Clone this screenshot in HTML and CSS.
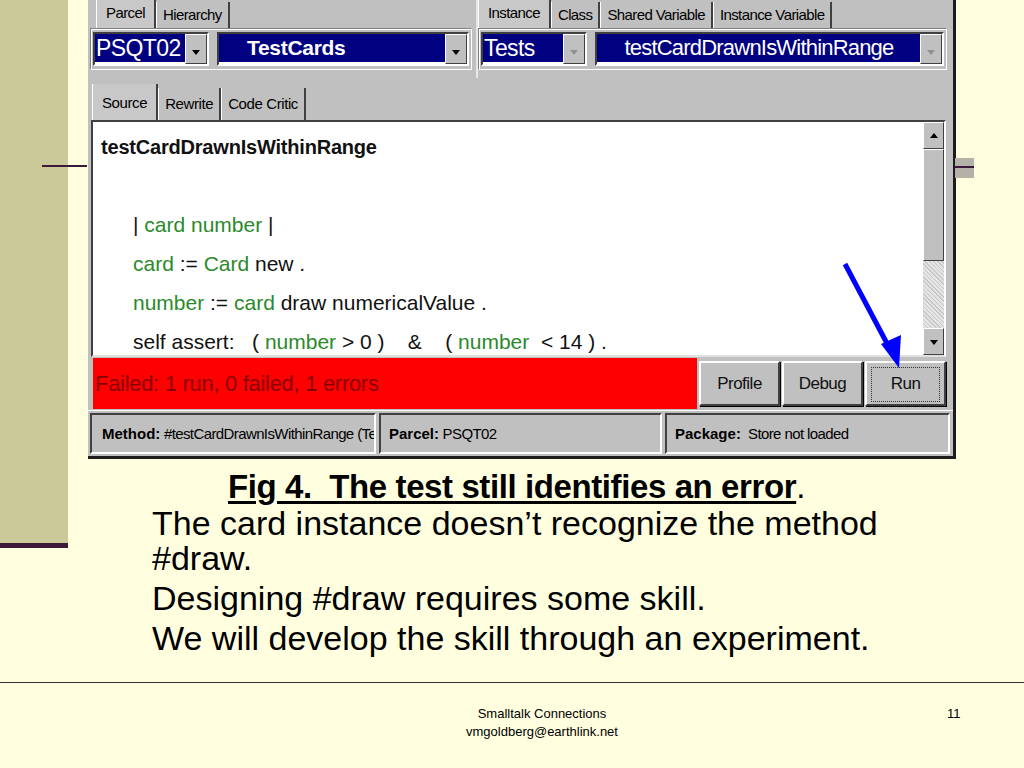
FILE: index.html
```html
<!DOCTYPE html>
<html lang="en">

<head>
    <meta charset="UTF-8">
    <title>Smalltalk Connections - 11</title>
    <link rel="stylesheet" href="styles.css">
</head>

<body>

    <div class="slide">

        <div class="top">
            <aside class="band"></aside>

            <main class="content">

                <section class="window">

                    <div class="panes">
                        <div class="pane pane-left">
                            <nav class="tabs">
                                <span class="tab active">Parcel</span>
                                <span class="tab">Hierarchy</span>
                            </nav>
                            <div class="combos">
                                <div class="combo small">
                                    <span class="field">PSQT02</span>
                                    <span class="drop"><i></i></span>
                                </div>
                                <div class="combo wide">
                                    <span class="field bold">TestCards</span>
                                    <span class="drop"><i></i></span>
                                </div>
                            </div>
                        </div>
                        <div class="pane pane-right">
                            <nav class="tabs">
                                <span class="tab active">Instance</span>
                                <span class="tab">Class</span>
                                <span class="tab">Shared Variable</span>
                                <span class="tab">Instance Variable</span>
                            </nav>
                            <div class="combos">
                                <div class="combo tests">
                                    <span class="field">Tests</span>
                                    <span class="drop off"><i></i></span>
                                </div>
                                <div class="combo wide">
                                    <span class="field center">testCardDrawnIsWithinRange</span>
                                    <span class="drop off"><i></i></span>
                                </div>
                            </div>
                        </div>
                    </div>

                    <nav class="tabs source-tabs">
                        <span class="tab active">Source</span>
                        <span class="tab">Rewrite</span>
                        <span class="tab">Code Critic</span>
                    </nav>

                    <div class="editor">
                        <div class="code">
                            <p class="selector">testCardDrawnIsWithinRange</p>
                            <p class="blank"></p>
                            <p class="line">| <span class="g">card number</span> |</p>
                            <p class="line"><span class="g">card</span> := <span class="g">Card</span> new .</p>
                            <p class="line"><span class="g">number</span> := <span class="g">card</span> draw numericalValue .</p>
                            <p class="line">self assert: &nbsp; ( <span class="g">number</span> &gt; 0 ) &nbsp;&nbsp; &amp; &nbsp;&nbsp; ( <span class="g">number</span> &nbsp;&lt; 14 ) .</p>
                        </div>
                        <div class="scroll">
                            <span class="arrow up"><i></i></span>
                            <span class="thumb"></span>
                            <span class="track"></span>
                            <span class="arrow down"><i></i></span>
                        </div>
                    </div>

                    <div class="status">
                        <div class="result">Failed: 1 run, 0 failed, 1 errors</div>
                        <button class="btn">Profile</button>
                        <button class="btn">Debug</button>
                        <button class="btn focus"><span>Run</span></button>
                    </div>

                    <div class="info">
                        <div class="cell method"><b>Method:</b> #testCardDrawnIsWithinRange (Te</div>
                        <div class="cell parcel"><b>Parcel:</b> PSQT02</div>
                        <div class="cell package"><b>Package:</b>&nbsp; Store not loaded</div>
                    </div>

                    <svg class="pointer" width="80" height="120" viewBox="0 0 80 120">
                        <line x1="5" y1="3" x2="51" y2="90" stroke="#0000ff" stroke-width="5" />
                        <polygon points="59,107 41,83 61,74" fill="#0000ff" />
                    </svg>
                </section>

                <div class="caption">
                    <h2><u>Fig 4.&nbsp; The test still identifies an error</u>.</h2>
                    <p>The card instance doesn’t recognize the method<br>#draw.</p>
                    <p>Designing #draw requires some skill.</p>
                    <p>We will develop the skill through an experiment.</p>
                </div>

            </main>

            <span class="rule-left"></span>
            <span class="rule-right"></span>
        </div>

        <footer>
            <div class="credit">Smalltalk Connections<br>vmgoldberg@earthlink.net</div>
            <div class="page">11</div>
        </footer>

    </div>

</body>

</html>
```

FILE: styles.css
```css
body {
    margin: 0;
    background-color: #ffffe0;
    font-family: "Liberation Sans", Arial, sans-serif;
}

.slide {
    width: 1024px;
    height: 768px;
    overflow: hidden;
}

.top {
    position: relative;
    height: 682px;
    display: flex;
    align-items: flex-start;
}

.band {
    width: 68px;
    height: 543px;
    flex-shrink: 0;
    background-color: #cbc99a;
    border-bottom: 5px solid #3d1838;
}

.content {
    margin-left: 20px;
    width: 868px;
}

/* the screenshot of the test runner */

.window {
    position: relative;
    width: 868px;
    height: 459px;
    box-sizing: border-box;
    background-color: #c0c0c0;
    border-right: 3px solid #1c1c1c;
    border-bottom: 3px solid #1c1c1c;
    display: flex;
    flex-direction: column;
}

.panes {
    display: flex;
    height: 78px;
    gap: 4px;
}

.pane-left {
    width: 382px;
    padding-left: 2px;
}

.pane-right {
    flex: 1;
    padding-right: 6px;
    border-left: 2px solid #e8e8e8;
}

.tabs {
    display: flex;
    height: 28px;
    align-items: flex-end;
    padding-left: 6px;
}

.pane-right .tabs {
    padding-left: 0;
}

.tab {
    height: 26px;
    padding: 0 6px;
    font-size: 15px;
    letter-spacing: -0.6px;
    line-height: 26px;
    color: #000;
    border-left: 1px solid #fff;
    border-right: 2px solid #404040;
    box-sizing: border-box;
}

.tab.active {
    height: 28px;
    padding: 0 9px;
    background-color: #c8c8c8;
}

.combos {
    display: flex;
    gap: 8px;
    height: 42px;
    box-sizing: border-box;
    padding: 3px 2px;
    border: 1px solid #808080;
    border-right-color: #fff;
    border-bottom-color: #fff;
    box-shadow: inset 1px 1px 0 #fff;
}

.combo {
    display: flex;
    border: 2px solid #404040;
    border-right-color: #fff;
    border-bottom-color: #fff;
    height: 34px;
    box-sizing: border-box;
}

.combo.small {
    width: 116px;
}

.combo.tests {
    width: 106px;
}

.combo.wide {
    flex: 1;
}

.field {
    flex: 1;
    background-color: #000080;
    color: #fff;
    font-size: 23px;
    letter-spacing: -0.6px;
    line-height: 28px;
    padding-left: 1px;
    border-bottom: 2px solid #fff;
    white-space: nowrap;
    overflow: hidden;
}

.field.center {
    text-align: center;
    font-size: 22px;
    letter-spacing: -0.8px;
}

.field.bold {
    font-weight: bold;
    font-size: 21px;
    letter-spacing: -0.3px;
    padding-left: 28px;
}

.drop {
    width: 20px;
    background-color: #c0c0c0;
    border: 1px solid #fff;
    border-right-color: #404040;
    border-bottom-color: #404040;
    display: flex;
    align-items: center;
    justify-content: center;
}

.drop i,
.arrow i {
    width: 0;
    height: 0;
    border-left: 4px solid transparent;
    border-right: 4px solid transparent;
    border-top: 5px solid #000;
    margin-top: 6px;
}

.drop.off i {
    border-top-color: #909090;
}

.source-tabs {
    height: 42px;
    padding-left: 4px;
}

.source-tabs .tab {
    height: 32px;
    line-height: 32px;
    letter-spacing: -0.4px;
}

.source-tabs .tab.active {
    height: 36px;
    line-height: 38px;
}

.editor {
    display: flex;
    height: 237px;
    margin: 0 7px 0 3px;
    border: 2px solid #404040;
    border-right-color: #fff;
    border-bottom-color: #e0e0e0;
    box-sizing: border-box;
}

.code {
    flex: 1;
    background-color: #fff;
    padding: 12px 0 0 8px;
    overflow: hidden;
}

.code p {
    margin: 0;
    font-size: 21px;
    height: 39px;
    line-height: 26px;
    color: #111;
    white-space: nowrap;
}

.code .selector {
    font-weight: bold;
    font-size: 20px;
    letter-spacing: -0.2px;
}

.code .line {
    padding-left: 32px;
}

.code .g {
    color: #2a8a2a;
}

.scroll {
    width: 21px;
    display: flex;
    flex-direction: column;
    background-color: #fff;
}

.arrow {
    height: 25px;
    background-color: #c0c0c0;
    border: 1px solid #fff;
    border-right-color: #404040;
    border-bottom-color: #404040;
    display: flex;
    align-items: center;
    justify-content: center;
}

.arrow.up i {
    border-top: 0;
    border-bottom: 5px solid #000;
    margin-top: 0;
}

.arrow.down i {
    margin-top: 2px;
}

.thumb {
    height: 110px;
    background-color: #c0c0c0;
    border: 1px solid #fff;
    border-right-color: #404040;
    border-bottom-color: #404040;
}

.track {
    flex: 1;
    background-color: #e4e4e4;
    background-image: repeating-linear-gradient(45deg, #c8c8c8 0 1px, transparent 1px 3px);
}

.status {
    display: flex;
    height: 53px;
    align-items: center;
    gap: 2px;
    padding: 0 7px 0 5px;
}

.result {
    width: 604px;
    height: 51px;
    background-color: #ff0000;
    color: #8a0000;
    font-size: 22px;
    letter-spacing: -0.3px;
    line-height: 52px;
    padding-left: 2px;
    box-sizing: border-box;
}

.btn {
    width: 81px;
    height: 45px;
    background-color: #c0c0c0;
    border: 2px solid #fff;
    border-right-color: #404040;
    border-bottom-color: #404040;
    box-shadow: 1px 1px 0 #000;
    font-family: inherit;
    font-size: 17px;
    letter-spacing: -0.5px;
    color: #111;
    padding: 4px;
}

.btn.focus span {
    display: block;
    height: 100%;
    line-height: 32px;
    border: 1px dotted #333;
}

.info {
    display: flex;
    height: 46px;
    gap: 3px;
    padding: 2px 3px 2px 2px;
    box-sizing: border-box;
    border-top: 1px solid #fff;
}

.cell {
    box-sizing: border-box;
    border: 2px solid #404040;
    border-right-color: #fff;
    border-bottom-color: #fff;
    font-size: 15px;
    letter-spacing: -0.6px;
    line-height: 38px;
    padding-left: 8px;
    white-space: nowrap;
    overflow: hidden;
}

.cell.method {
    width: 286px;
    padding-left: 10px;
}

.cell.parcel {
    width: 283px;
}

.cell.package {
    flex: 1;
}

.cell b {
    letter-spacing: 0;
}

.pointer {
    position: absolute;
    left: 752px;
    top: 261px;
}

/* slide text */

.caption {
    padding-left: 64px;
    color: #000;
}

.caption h2 {
    margin: 10px 0 0;
    padding-left: 76px;
    font-size: 33px;
    letter-spacing: -0.4px;
    line-height: 36px;
    font-weight: normal;
}

.caption h2 u {
    font-weight: bold;
    text-underline-offset: 3px;
}

.caption p {
    margin: 1px 0 5px;
    font-size: 34px;
    line-height: 35px;
}

.rule-left {
    position: absolute;
    left: 42px;
    top: 165px;
    width: 45px;
    height: 2px;
    background-color: #3d1838;
}

.rule-right {
    position: absolute;
    left: 955px;
    top: 158px;
    width: 19px;
    height: 20px;
    background-color: #b4b2a8;
    border-top: 8px solid #b4b2a8;
    box-sizing: border-box;
}

.rule-right::after {
    content: "";
    display: block;
    height: 2px;
    background-color: #3d1838;
}

footer {
    border-top: 1px solid #333;
    height: 85px;
    display: flex;
    align-items: flex-start;
    padding-top: 22px;
    box-sizing: border-box;
    font-size: 13px;
    line-height: 18px;
    color: #000;
}

.credit {
    width: 200px;
    margin-left: 442px;
    text-align: center;
}

.page {
    margin-left: 305px;
}
```
